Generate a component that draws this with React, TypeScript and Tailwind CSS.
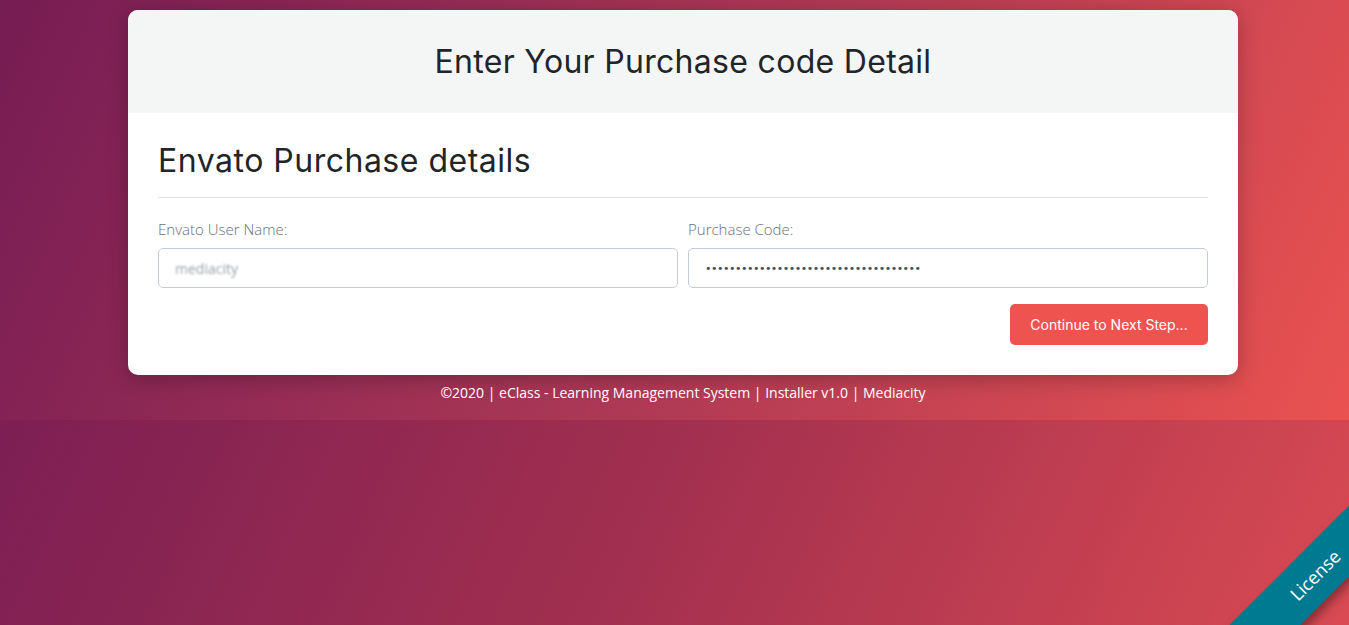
import React from 'react';

const headingFont = "font-['Inter','Noto_Sans',sans-serif]";
const bodyFont = "font-['Open_Sans','Noto_Sans',sans-serif]";

const License: React.FC = () => (
  <div className="absolute right-0 bottom-0 w-[150px] h-[150px] overflow-hidden">
    <div
      className={`absolute left-[-34px] top-[75px] w-[300px] h-[50px] -rotate-45 bg-[#007a90] text-white text-[18px] flex items-center justify-center shadow-[0_6px_10px_rgba(0,0,0,0.35)] ${bodyFont}`}
    >
      <span>License</span>
    </div>
  </div>
);

const App: React.FC = () => {
  return (
    <div className="relative min-h-[625px] overflow-hidden bg-[linear-gradient(115deg,#721a55_0%,#a3304f_55%,#d94a52_100%)]">
      <section className="bg-[linear-gradient(115deg,#761c54_0%,#b03a55_55%,#ea5250_100%)] pt-[10px] pb-[17px]">
        <div className="w-[1110px] ml-[128px]">
          <div className="bg-white rounded-[10px] overflow-hidden shadow-[0_4px_20px_rgba(0,0,0,0.25)]">
            <div className="bg-[#f4f6f5] h-[103px] flex items-center justify-center">
              <h2 className={`text-[32px] text-[#212529] tracking-[0.3px] ${headingFont}`}>
                Enter Your Purchase code Detail
              </h2>
            </div>
            <div className="px-[30px] pt-[28px] pb-[30px]">
              <h3 className={`text-[32px] leading-[40px] text-[#212529] tracking-[0.5px] ${headingFont}`}>
                Envato Purchase details
              </h3>
              <hr className="mt-[16px] border-t border-[#e2e2e2]" />
              <div className="grid grid-cols-2 gap-[10px] mt-[21px]">
                <div>
                  <label className={`block text-[15px] font-light text-[#6b6f73] leading-[20px] ${bodyFont}`}>
                    Envato User Name:
                  </label>
                  <div className="mt-[9px] h-[40px] border border-[#c3ccd6] rounded-[5px] flex items-center px-[16px]">
                    <span className={`text-[14px] text-[#9aa0a6] blur-[1.2px] ${bodyFont}`}>mediacity</span>
                  </div>
                </div>
                <div>
                  <label className={`block text-[15px] font-light text-[#6b6f73] leading-[20px] ${bodyFont}`}>
                    Purchase Code:
                  </label>
                  <div className="mt-[9px] h-[40px] border border-[#c3ccd6] rounded-[5px] flex items-center px-[16px]">
                    <span className="text-[11px] text-[#495057] tracking-[-0.5px] font-['DejaVu_Sans',sans-serif] leading-none">
                      {'•'.repeat(36)}
                    </span>
                  </div>
                </div>
              </div>
              <div className="flex justify-end mt-[16px]">
                <button
                  className={`w-[198px] h-[41px] bg-[#ef5350] text-white text-[14px] rounded-[5px] ${headingFont}`}
                >
                  Continue to Next Step...
                </button>
              </div>
            </div>
          </div>
        </div>
        <p className={`text-center text-white text-[14px] leading-[20px] mt-[8px] pl-[17px] ${bodyFont}`}>
          ©2020 | eClass - Learning Management System | Installer v1.0 | Mediacity
        </p>
      </section>
      <License />
    </div>
  );
};

export default App;
